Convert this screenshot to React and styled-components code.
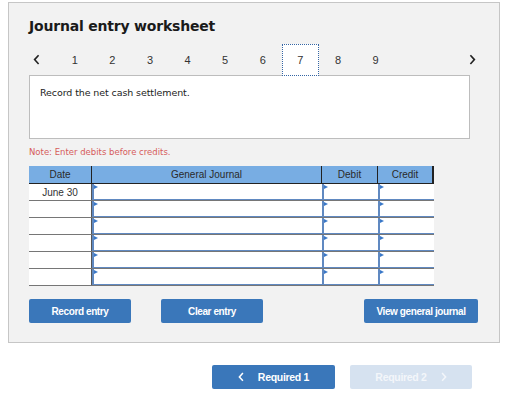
import React from "react";
import styled, { createGlobalStyle } from "styled-components";

const GlobalStyle = createGlobalStyle`
    body {
        margin: 0;
        background: #ffffff;
        font-family: "Liberation Sans", Arial, sans-serif;
    }
`

const Page = styled.div`
    padding: 2px 0 0 8px;
    width: 529px;
    box-sizing: border-box;
`

const Panel = styled.section`
    width: 492px;
    box-sizing: border-box;
    background: #f2f2f2;
    border: 1px solid #c6c6c6;
    padding: 13px 20px 19px 20px;
`

const Title = styled.h1`
    margin: 0;
    font-family: "DejaVu Sans", Verdana, sans-serif;
    font-size: 14px;
    font-weight: bold;
    color: #1a1a1a;
    letter-spacing: -0.2px;
    line-height: 20px;
`

const Nav = styled.nav`
    display: flex;
    align-items: stretch;
    height: 32px;
    margin-top: 8px;
    margin-bottom: -1px;
    width: 447px;
    position: relative;
    z-index: 1;
`

const Arrow = styled.span`
    width: 27px;
    display: flex;
    align-items: center;
    justify-content: ${p => (p.$right ? "flex-end" : "flex-start")};
    margin-left: ${p => (p.$right ? "auto" : "0")};
    padding-left: ${p => (p.$right ? "0" : "4px")};
    box-sizing: border-box;
    color: #222;
`

const Tabs = styled.div`
    display: grid;
    grid-template-columns: repeat(9, 37.6px);
`

const Tab = styled.span`
    display: flex;
    align-items: center;
    justify-content: center;
    font-size: 11px;
    color: #333;
    box-sizing: border-box;
    background: ${p => (p.$active ? "#ffffff" : "transparent")};
    border: ${p => (p.$active ? "1px dotted #3465a4" : "1px solid transparent")};
`

const Prompt = styled.div`
    width: 441px;
    height: 64px;
    box-sizing: border-box;
    background: #ffffff;
    border: 1px solid #bdbdbd;
    padding: 11px 10px;
    font-family: "DejaVu Sans", Verdana, sans-serif;
    font-size: 9.5px;
    letter-spacing: -0.1px;
    color: #222;
`

const Note = styled.p`
    margin: 7px 0 0 0;
    font-family: "DejaVu Sans", Verdana, sans-serif;
    font-size: 8.5px;
    color: #d65c5c;
    line-height: 12px;
`

const Table = styled.div`
    margin-top: 8px;
    width: 405px;
`

const HeaderRow = styled.div`
    display: grid;
    grid-template-columns: 63px 230px 56px 56px;
    height: 18px;
    background: #78ade3;
    border-bottom: 1px solid #222;
    box-sizing: border-box;
`

const HeadCell = styled.div`
    display: flex;
    align-items: center;
    justify-content: center;
    font-size: 10px;
    color: #2a2a2a;
    border-right: 1px solid #222;
    &:last-child {
        border-right: 2px solid #222;
    }
`

const Row = styled.div`
    display: grid;
    grid-template-columns: 63px 230px 56px 56px;
    height: 17px;
    box-sizing: border-box;
    border-bottom: 1px solid #767676;
    border-right: 2px solid #767676;
    background: #ffffff;
`

const DateCell = styled.div`
    display: flex;
    align-items: center;
    justify-content: center;
    font-size: 10px;
    color: #333;
    border-right: 1px solid #555;
`

const InputCell = styled.div`
    position: relative;
    background: #ffffff;
    border-left: 2px solid #6089c1;
    border-bottom: 1px solid #6089c1;
    &::before {
        content: "";
        position: absolute;
        top: 1px;
        left: 0;
        border-top: 2px solid transparent;
        border-bottom: 2px solid transparent;
        border-left: 4px solid #3a78c8;
    }
`

const Actions = styled.div`
    display: flex;
    align-items: center;
    margin-top: 13px;
    width: 449px;
`

const Button = styled.button`
    height: 24px;
    width: ${p => p.$w}px;
    margin-right: ${p => p.$gap || 0}px;
    margin-left: ${p => (p.$push ? "auto" : "0")};
    border: none;
    border-radius: 2px;
    background: #3a77ba;
    color: #ffffff;
    font-family: "Liberation Sans", Arial, sans-serif;
    font-weight: bold;
    font-size: 10px;
    letter-spacing: -0.4px;
    cursor: pointer;
    padding: 0;
`

const Footer = styled.div`
    display: flex;
    gap: 15px;
    margin: 22px 0 0 204px;
`

const StepButton = styled.button`
    height: 24px;
    width: ${p => p.$w}px;
    border: none;
    border-radius: 2px;
    background: ${p => (p.$disabled ? "#d6e2f0" : "#3a77ba")};
    color: ${p => (p.$disabled ? "#f3f6fa" : "#ffffff")};
    font-family: "Liberation Sans", Arial, sans-serif;
    font-weight: bold;
    font-size: 10.5px;
    letter-spacing: -0.3px;
    display: flex;
    align-items: center;
    justify-content: center;
    gap: 13px;
    padding: 0;
`

const Chevron = ({ dir, size = 10, width = 2 }) => (
    <svg width={size} height={size * 1.4} viewBox="0 0 10 14" fill="none">
        <path
            d={dir === "left" ? "M7 1.5 L2 7 L7 12.5" : "M3 1.5 L8 7 L3 12.5"}
            stroke="currentColor"
            strokeWidth={width}
        />
    </svg>
)

const ROWS = ["June 30", "", "", "", "", ""]

export default function App() {
    return (
        <Page>
            <GlobalStyle />
            <Panel>
                <Title>Journal entry worksheet</Title>
                <Nav>
                    <Arrow><Chevron dir="left" size={8} width={2} /></Arrow>
                    <Tabs>
                        {[1, 2, 3, 4, 5, 6, 7, 8, 9].map(n => (
                            <Tab key={n} $active={n === 7}>{n}</Tab>
                        ))}
                    </Tabs>
                    <Arrow $right><Chevron dir="right" size={8} width={2} /></Arrow>
                </Nav>
                <Prompt>Record the net cash settlement.</Prompt>
                <Note>Note: Enter debits before credits.</Note>
                <Table>
                    <HeaderRow>
                        <HeadCell>Date</HeadCell>
                        <HeadCell>General Journal</HeadCell>
                        <HeadCell>Debit</HeadCell>
                        <HeadCell>Credit</HeadCell>
                    </HeaderRow>
                    {ROWS.map((d, i) => (
                        <Row key={i}>
                            <DateCell>{d}</DateCell>
                            <InputCell />
                            <InputCell />
                            <InputCell />
                        </Row>
                    ))}
                </Table>
                <Actions>
                    <Button $w={102} $gap={30}>Record entry</Button>
                    <Button $w={102}>Clear entry</Button>
                    <Button $w={114} $push>View general journal</Button>
                </Actions>
            </Panel>
            <Footer>
                <StepButton $w={123}><Chevron dir="left" size={7} width={2.2} />Required 1</StepButton>
                <StepButton $w={122} $disabled>Required 2<Chevron dir="right" size={7} width={2.2} /></StepButton>
            </Footer>
        </Page>
    )
}
